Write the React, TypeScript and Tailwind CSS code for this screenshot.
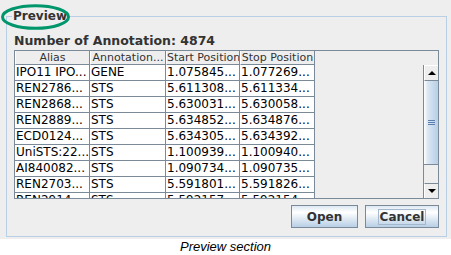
import React from "react"

const rows = [
  ["IPO11 IPO...", "GENE", "1.075845...", "1.077269..."],
  ["REN2786...", "STS", "5.611308...", "5.611334..."],
  ["REN2868...", "STS", "5.630031...", "5.630058..."],
  ["REN2889...", "STS", "5.634852...", "5.634876..."],
  ["ECD0124...", "STS", "5.634305...", "5.634392..."],
  ["UniSTS:22...", "STS", "1.100939...", "1.100940..."],
  ["AI840082...", "STS", "1.090734...", "1.090735..."],
  ["REN2703...", "STS", "5.591801...", "5.591826..."],
  ["REN2914...", "STS", "5.592157...", "5.592154..."],
]

const headers = ["Alias", "Annotation...", "Start Position", "Stop Position"]
const colWidths = ["w-[75px]", "w-[76px]", "w-[74px]", "w-[75px]"]

function ScrollBar() {
  return (
    <div className="w-[15px] flex flex-col border-l border-[#7a8a99] bg-[#eeeeee]">
      <div className="h-[16px] shrink-0 flex items-center justify-center border-b border-[#7a8a99] border-l border-l-white border-t border-t-white">
        <div className="w-0 h-0 border-x-[4px] border-x-transparent border-b-[4px] border-b-black" />
      </div>
      <div className="h-[84px] shrink-0 flex flex-col items-center justify-center gap-[1px] border-b border-[#7a8a99] bg-[linear-gradient(to_right,#ffffff,#dde8f3_25%,#c4d8ec_70%,#b8cfe5)]">
        <div className="w-[7px] h-[1px] bg-[#5b7fb0]" />
        <div className="w-[7px] h-[1px] bg-[#5b7fb0]" />
        <div className="w-[7px] h-[1px] bg-[#5b7fb0]" />
      </div>
      <div className="flex-1" />
      <div className="h-[15px] shrink-0 flex items-center justify-center border-t border-[#7a8a99] border-l border-l-white">
        <div className="w-0 h-0 border-x-[4px] border-x-transparent border-t-[4px] border-t-black" />
      </div>
    </div>
  )
}

export default function App() {
  return (
    <div className="relative w-[451px] h-[255px] bg-white flex flex-col font-['DejaVu_Sans',sans-serif]">
      <div className="h-[239px] bg-[#eeeeee] pt-[9px] pl-[6px] pr-[4px] pb-[2px]">
        <fieldset className="h-full border border-[#b8cfe5] px-[7px] pt-[9px] flex flex-col">
          <legend className="-ml-[2px] px-[1px] text-[12px] leading-[15px] font-bold text-[#333333]">Preview</legend>
          <div className="text-[12.5px] leading-[15px] font-bold text-[#333333]">Number of Annotation: 4874</div>
          <div className="mt-[2px] h-[149px] border border-[#7a8a99] flex flex-col">
            <div className="h-[14px] shrink-0 flex">
              {headers.map((h, i) => (
                <div
                  key={h}
                  className={`${colWidths[i]} shrink-0 border-r border-b border-[#7a8a99] border-l border-l-white text-center text-[11px] leading-[13px] text-[#333333] whitespace-nowrap overflow-hidden`}
                >
                  {h}
                </div>
              ))}
            </div>
            <div className="flex-1 flex min-h-0">
              <div className="flex-1 overflow-hidden">
                {rows.map((r, ri) => (
                  <div key={ri} className="h-[16px] flex">
                    {r.map((c, ci) => (
                      <div
                        key={ci}
                        className={`${colWidths[ci]} shrink-0 bg-white border-r border-b border-[#7a8a99] pl-[1px] text-[12px] leading-[15px] text-black whitespace-nowrap overflow-hidden`}
                      >
                        {c}
                      </div>
                    ))}
                  </div>
                ))}
              </div>
              <ScrollBar />
            </div>
          </div>
          <div className="mt-[6px] flex justify-end gap-[7px]">
            <button className="w-[67px] h-[23px] border border-[#7a8a99] bg-[linear-gradient(to_bottom,#dde8f3,#ffffff_30%,#b8cfe5)] text-[12px] font-bold text-[#333333]">
              Open
            </button>
            <button className="w-[74px] h-[23px] border border-[#7a8a99] bg-[linear-gradient(to_bottom,#dde8f3,#ffffff_30%,#b8cfe5)] text-[12px] font-bold text-[#333333] flex items-center justify-center">
              <span className="border border-[#a3b8cc] px-[1px] leading-[14px]">Cancel</span>
            </button>
          </div>
        </fieldset>
      </div>
      <div className="flex-1 text-center text-[13px] leading-[16px] italic text-black font-['Liberation_Sans',sans-serif]">
        Preview section
      </div>
      <svg className="absolute left-[1px] top-[4px]" width="70" height="26" viewBox="0 0 70 26">
        <ellipse cx="34.5" cy="13" rx="33" ry="11.3" fill="none" stroke="#00966c" strokeWidth="3" />
      </svg>
    </div>
  )
}
